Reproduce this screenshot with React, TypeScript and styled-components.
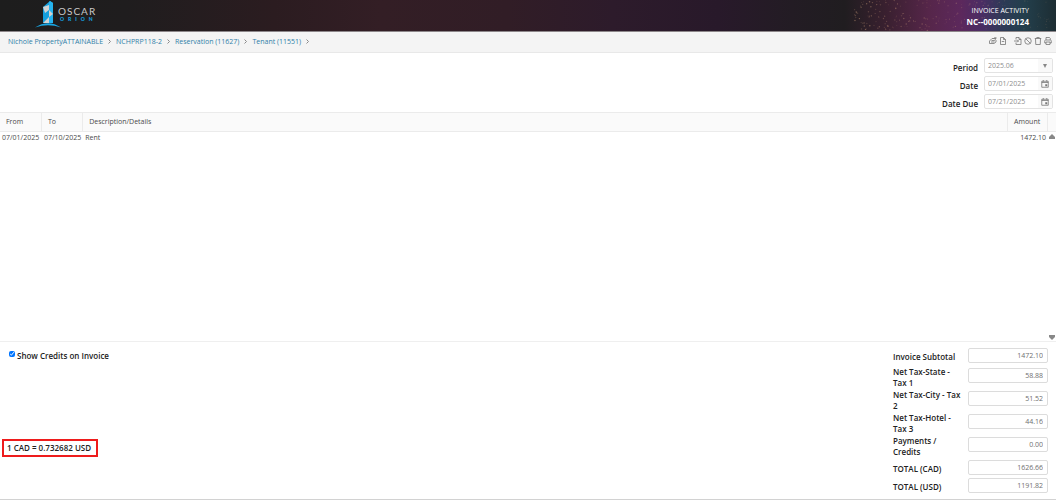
import React from 'react';
import styled, { createGlobalStyle } from 'styled-components';

const Global = createGlobalStyle`
  * { box-sizing: border-box; }
  body { margin: 0; background: #fff; color: #4a4a4a; font: 7px/11px "Open Sans", "Noto Sans", sans-serif; }
  input, select, button { font-family: inherit; }
`;

const Page = styled.div`
  display: flex;
  flex-direction: column;
  min-height: 100vh;
  border-bottom: 1px solid #d2d2d2;
`;

const Header = styled.header`
  position: relative;
  display: flex;
  justify-content: space-between;
  height: 32px;
  padding: 0 27px 0 35px;
  border-bottom: 1px solid #8d878a;
  background: linear-gradient(90deg, #1d1d1d 0%, #1f1d1e 12%, #2b1c20 26%, #331e25 36%, #311d26 48%, #2d1b2b 58%, #28192a 68%, #231c24 75%, #201d20 80%, #3a2030 84%, #56264a 88%, #5c285c 91%, #4a2d64 93%, #2d3a56 95%, #233f4c 97%, #1d2d33 100%);
`;

const Stars = styled.svg`
  position: absolute;
  right: 0;
  top: 0;
  width: 216px;
  height: 31px;
`;

const Logo = styled.svg`
  width: 64px;
  height: 30px;
`;

const Title = styled.div`
  position: relative;
  padding-top: 5px;
  color: #fff;
  text-align: right;
  line-height: 11px;
`;

const TitleNumber = styled.div`
  font-size: 8px;
  font-weight: 700;
`;

const Bar = styled.nav`
  display: flex;
  align-items: center;
  justify-content: space-between;
  height: 21px;
  padding: 0 4px 2px 8px;
  border-bottom: 1px solid #e8e8e8;
  background: #f4f4f4;
`;

const Crumbs = styled.div`
  display: flex;
  align-items: center;
  gap: 5px;
`;

const Crumb = styled.a`
  color: #2f7fa8;
  text-decoration: none;
`;

const Tools = styled.div`
  display: flex;
  gap: 2px;
`;

const Tool = styled.button<{ $apart?: boolean }>`
  display: flex;
  margin: 0 0 0 ${p => (p.$apart ? 5 : 0)}px;
  padding: 0;
  border: 0;
  background: none;
`;

const Glyph = styled.svg`
  display: block;
  fill: none;
  stroke: #6f6f6f;
  stroke-width: 1.5;
  stroke-linejoin: round;
`;

const Form = styled.form`
  padding: 5px 3px 0;
`;

const Field = styled.div`
  display: flex;
  justify-content: flex-end;
  gap: 6px;
  height: 18px;
`;

const Label = styled.label`
  padding-top: 4px;
  font-size: 8px;
  font-weight: 600;
  line-height: 11px;
  color: #222;
`;

const Box = styled.div`
  display: flex;
  width: 69px;
  height: 15px;
  border: 1px solid #e3e3e3;
  border-radius: 2px;
  background: #fff;
`;

const BoxInput = styled.input`
  flex: 1;
  min-width: 0;
  padding: 0 3px;
  border: 0;
  background: none;
  color: #8f8f8f;
  font-size: 7px;
`;

const BoxSelect = styled(BoxInput).attrs({ as: 'select' })`
  appearance: none;
`;

const BoxIcon = styled.span`
  display: flex;
  align-items: center;
  justify-content: center;
  width: 14px;
  background: #f9f9f9;
`;

const Grid = styled.section`
  display: flex;
  flex: 1;
  border-bottom: 1px solid #efefef;
  background: linear-gradient(#fafafa 19px, #ebebeb 19px, #ebebeb 20px, transparent 20px);
`;

const Table = styled.table`
  flex: 1;
  align-self: flex-start;
  border-collapse: separate;
  border-spacing: 0;
  table-layout: fixed;
`;

const Th = styled.th<{ $w?: number }>`
  width: ${p => (p.$w ? p.$w + 'px' : 'auto')};
  height: 20px;
  padding: 0 5px 1px 6px;
  border: solid #ebebeb;
  border-width: 1px 1px 1px 0;
  font-weight: 400;
  text-align: left;
`;

const Td = styled.td<{ $right?: boolean }>`
  padding: 0 2px;
  text-align: ${p => (p.$right ? 'right' : 'left')};
`;

const Scroll = styled.div`
  display: flex;
  flex-direction: column;
  justify-content: space-between;
  align-items: center;
  width: 8px;
  padding: 21px 0 1px;
  border-top: 1px solid #ebebeb;
`;

const ScrollButton = styled.button`
  display: flex;
  padding: 0;
  border: 0;
  background: none;
`;

const Footer = styled.footer`
  display: flex;
  justify-content: space-between;
  padding: 4px 8px 5px 2px;
`;

const Left = styled.div`
  display: flex;
  flex-direction: column;
  justify-content: space-between;
  align-items: flex-start;
  padding: 4px 0 37px;
`;

const Check = styled.label`
  display: flex;
  gap: 2px;
  padding-left: 7px;
  font-size: 8px;
  font-weight: 600;
  line-height: 11px;
  color: #222;
`;

const CheckInput = styled.input`
  width: 6px;
  height: 6px;
  margin: 1px 0 0;
`;

const Rate = styled.div`
  padding: 0 5px 0 3px;
  border: 2px solid #ee1c1c;
  font-size: 8px;
  font-weight: 600;
  line-height: 14px;
  color: #222;
`;

const Totals = styled.div`
  width: 155px;
`;

const Total = styled.div<{ $lead?: boolean; $tall?: boolean }>`
  display: grid;
  grid-template-columns: 69px 80px;
  justify-content: space-between;
  min-height: ${p => (p.$tall ? 23 : p.$lead ? 20 : 18)}px;
`;

const TotalLabel = styled(Label)<{ $tall?: boolean }>`
  padding-top: ${p => (p.$tall ? 0 : 5)}px;
`;

const TotalInput = styled.input`
  width: 100%;
  height: 15px;
  margin-top: 2px;
  padding: 0 4px;
  border: 1px solid #dcdcdc;
  border-radius: 2px;
  color: #6f6f6f;
  font-size: 7px;
  text-align: right;
`;

const WordOscar = styled.text`
  fill: #c9c9c9;
  font: 400 10px Lato, sans-serif;
  letter-spacing: 1px;
`;

const WordOrion = styled.text`
  fill: #15a3e0;
  font: 900 5px Lato, sans-serif;
  letter-spacing: 4px;
`;

/* Deterministic scatter, denser toward the left of the glow. */
const noise = (n: number) => {
  const v = Math.sin(n * 127.1 + 11.7) * 43758.5453;
  return v - Math.floor(v);
};
const stars = Array.from({ length: 210 }, (_, i) => {
  const u = noise(i);
  return {
    x: 14 + Math.pow(u, 1.3) * 196,
    y: noise(i + 500) * 31,
    r: 0.4 + noise(i + 900) * 0.4,
    o: (0.15 + noise(i + 1300) * 0.35) * (1 - u * 0.6),
  };
});

const crumbs = ['Nichole PropertyATTAINABLE', 'NCHPRP118-2', 'Reservation (11627)', 'Tenant (11551)'];

const tools = [
  { name: 'Payment', d: 'M1 8l5-5h8l-3 4H5M1 8v5h9l4-3V6M4 10h7M9 3l2-1.500h4' },
  { name: 'Document', d: 'M3 1h6l4 4v10H3zM9 1v4h4M5.500 9h5' },
  { name: 'Export', d: 'M4 5V1h6l4 4v10H4v-4M10 1v4h4M0 8h9M6.500 5.500L9 8l-2.500 2.500', apart: true },
  { name: 'Void', d: 'M8 1.500a6.500 6.500 0 1 0 0 13a6.500 6.500 0 1 0 0-13M3.500 3.500l9 9' },
  { name: 'Delete', d: 'M1.500 3h13M5.500 3V1h5v2M3 3l.5 12h9L13 3' },
  { name: 'Print', d: 'M4 6V1h7l1.500 1.500V6M4 12H1.500V7.500L3 6h10l1.500 1.500V12H12M4 10h8v5H4z' },
];

const totals = [
  { label: 'Invoice Subtotal', value: '1472.10', lead: true },
  { label: 'Net Tax-State - Tax 1', value: '58.88', tall: true },
  { label: 'Net Tax-City - Tax 2', value: '51.52', tall: true },
  { label: 'Net Tax-Hotel - Tax 3', value: '44.16', tall: true },
  { label: 'Payments / Credits', value: '0.00', tall: true },
  { label: 'TOTAL (CAD)', value: '1626.66' },
  { label: 'TOTAL (USD)', value: '1191.82' },
];

function CalendarIcon() {
  return (
    <Glyph width="8" height="8" viewBox="0 0 16 16">
      <path d="M1.500 2.500h13v12h-13zM1.500 5h13M4.500 0v3M11.500 0v3" />
      <path d="M8.500 8.500h4v4h-4z" fill="#777" stroke="none" />
    </Glyph>
  );
}

export default function App() {
  return (
    <Page>
      <Global />
      <Header>
        <Stars viewBox="0 0 216 31" aria-hidden="true">
          {stars.map((s, i) => <circle key={i} cx={s.x} cy={s.y} r={s.r} fill="#d9a882" opacity={s.o} />)}
        </Stars>
        <Logo viewBox="0 0 64 30">
          <path d="M8 7l7-6 3 2v20H8z" fill="#159fdd" />
          <path d="M14 2l1-1 3 2v20h-4z" fill="#25b4f0" />
          <path d="M8 7l6-2v5l-4 3zM14 10l4 4-4 3zM14 17l-6 6h6z" fill="#d2d2d2" />
          <path d="M0 27.500Q13 19 26 27.500Q13 23 0 27.500z" fill="#18a8e6" />
          <WordOscar x="23" y="15">OSCAR</WordOscar>
          <WordOrion x="25" y="21">ORION</WordOrion>
        </Logo>
        <Title>
          <div>INVOICE ACTIVITY</div>
          <TitleNumber>NC--0000000124</TitleNumber>
        </Title>
      </Header>
      <Bar>
        <Crumbs>
          {crumbs.map(c => (
            <React.Fragment key={c}>
              <Crumb href="#">{c}</Crumb>
              <svg width="3" height="5" viewBox="0 0 3 5"><path d="M.5.5l2 2-2 2" fill="none" stroke="#8a8a8a" /></svg>
            </React.Fragment>
          ))}
        </Crumbs>
        <Tools>
          {tools.map(t => (
            <Tool key={t.name} type="button" aria-label={t.name} $apart={t.apart}>
              <Glyph width="8" height="8" viewBox="0 0 16 16"><path d={t.d} /></Glyph>
            </Tool>
          ))}
        </Tools>
      </Bar>
      <Form>
        <Field>
          <Label htmlFor="period">Period</Label>
          <Box>
            <BoxSelect id="period"><option>2025.06</option></BoxSelect>
            <BoxIcon><svg width="4" height="4"><path d="M0 0h4L2 4z" fill="#888" /></svg></BoxIcon>
          </Box>
        </Field>
        <Field>
          <Label htmlFor="date">Date</Label>
          <Box><BoxInput id="date" defaultValue="07/01/2025" /><BoxIcon><CalendarIcon /></BoxIcon></Box>
        </Field>
        <Field>
          <Label htmlFor="due">Date Due</Label>
          <Box><BoxInput id="due" defaultValue="07/21/2025" /><BoxIcon><CalendarIcon /></BoxIcon></Box>
        </Field>
      </Form>
      <Grid>
        <Table>
          <thead><tr><Th $w={42}>From</Th><Th $w={41}>To</Th><Th>Description/Details</Th><Th $w={40}>Amount</Th></tr></thead>
          <tbody><tr><Td>07/01/2025</Td><Td>07/10/2025</Td><Td>Rent</Td><Td $right>1472.10</Td></tr></tbody>
        </Table>
        <Scroll>
          <ScrollButton type="button" aria-label="Scroll up"><svg width="6" height="5"><path d="M3 0l3 3v2H0V3z" fill="#888" /></svg></ScrollButton>
          <ScrollButton type="button" aria-label="Scroll down"><svg width="6" height="5"><path d="M3 5L0 2V0h6v2z" fill="#888" /></svg></ScrollButton>
        </Scroll>
      </Grid>
      <Footer>
        <Left>
          <Check><CheckInput type="checkbox" defaultChecked />Show Credits on Invoice</Check>
          <Rate>1 CAD = 0.732682 USD</Rate>
        </Left>
        <Totals>
          {totals.map(t => (
            <Total key={t.label} $lead={t.lead} $tall={t.tall}>
              <TotalLabel htmlFor={t.label} $tall={t.tall}>{t.label}</TotalLabel>
              <TotalInput id={t.label} defaultValue={t.value} />
            </Total>
          ))}
        </Totals>
      </Footer>
    </Page>
  );
}
